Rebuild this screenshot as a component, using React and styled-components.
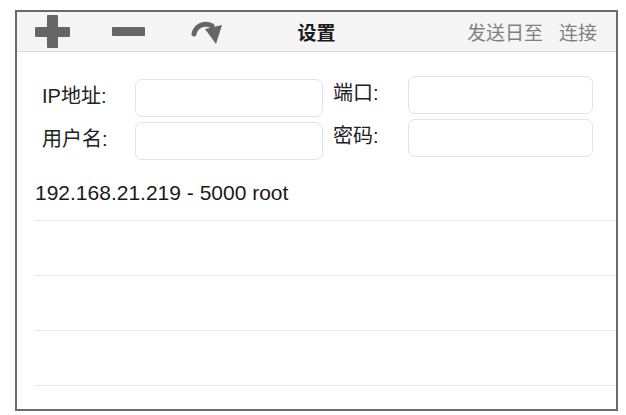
import React from "react";
import styled, { createGlobalStyle } from "styled-components";

const hosts = ["192.168.21.219 - 5000 root", "", "", ""];

export default function App() {
  return (
    <>
      <GlobalStyle />
      <Window>
        <Toolbar>
          <Tools>
            <PlusIcon />
            <MinusIcon />
            <RedoIcon />
          </Tools>
          <Title>设置</Title>
          <Actions>
            <Action>发送日至</Action>
            <Action>连接</Action>
          </Actions>
        </Toolbar>

        <Form>
          <FieldGroup $offset={3}>
            <Label>IP地址:</Label>
            <Input width={188} />
            <Label>用户名:</Label>
            <Input width={188} />
          </FieldGroup>
          <FieldGroup $offset={0} $labelWidth={75}>
            <Label>端口:</Label>
            <Input width={185} />
            <Label>密码:</Label>
            <Input width={185} type="password" />
          </FieldGroup>
        </Form>

        <List>
          {hosts.map((h, i) => (
            <Row key={i}>{h}</Row>
          ))}
        </List>
      </Window>
    </>
  );
}

function PlusIcon() {
  return (
    <svg width="35" height="33" viewBox="0 0 35 33">
      <rect x="0" y="12" width="35" height="10" rx="1" fill="#666" />
      <rect x="12" y="0" width="11" height="33" rx="1" fill="#666" />
    </svg>
  );
}

function MinusIcon() {
  return (
    <svg width="33" height="33" viewBox="0 0 33 33">
      <rect x="0" y="12" width="33" height="9" rx="1" fill="#666" />
    </svg>
  );
}

function RedoIcon() {
  return (
    <svg width="34" height="30" viewBox="0 0 34 30">
      <path
        d="M4 17 A12 12 0 0 1 22 9"
        stroke="#666"
        strokeWidth="5"
        fill="none"
        strokeLinecap="round"
      />
      <polygon points="15,12 32,8 26,27" fill="#666" />
    </svg>
  );
}

const GlobalStyle = createGlobalStyle`
  body {
    margin: 0;
    background: #fff;
    font-family: "Liberation Sans", "Noto Sans CJK SC", sans-serif;
  }
`;

const Window = styled.div`
  margin: 10px 0 0 15px;
  width: 603px;
  height: 401px;
  box-sizing: border-box;
  border: 2px solid #6b6b6b;
  background: #fff;
  overflow: hidden;
`;

const Toolbar = styled.div`
  display: grid;
  grid-template-columns: 1fr auto 1fr;
  align-items: center;
  height: 39px;
  background: #f5f5f5;
  border-bottom: 1px solid #d9d9d9;
`;

const Tools = styled.div`
  display: flex;
  align-items: center;
  padding-left: 18px;
  gap: 42px;
  & > svg:last-child {
    margin-left: 3px;
  }
`;

const Title = styled.div`
  font-family: "Noto Sans CJK SC", sans-serif;
  font-weight: 700;
  font-size: 19px;
  color: #1a1a1a;
`;

const Actions = styled.div`
  display: flex;
  justify-content: flex-end;
  gap: 16px;
  padding-right: 19px;
`;

const Action = styled.span`
  font-family: "Noto Sans CJK SC", sans-serif;
  font-size: 19px;
  color: #808080;
`;

const Form = styled.div`
  display: flex;
  align-items: flex-start;
  gap: 10px;
  padding: 24px 0 0 25px;
  height: 90px;
`;

const FieldGroup = styled.div`
  display: grid;
  grid-template-columns: ${(p) => p.$labelWidth || 93}px auto;
  row-gap: 5px;
  align-items: center;
  margin-top: ${(p) => p.$offset}px;
`;

const Label = styled.span`
  font-family: "Liberation Sans", "Noto Sans CJK SC", sans-serif;
  font-size: 20px;
  line-height: 1;
  padding-bottom: 5px;
  color: #222;
`;

const Input = styled.input`
  width: ${(p) => p.width}px;
  height: 38px;
  box-sizing: border-box;
  border: 1.5px solid #e3e3e3;
  border-radius: 7px;
  background: #fff;
  outline: none;
`;

const List = styled.div`
  margin-left: 18px;
`;

const Row = styled.div`
  display: flex;
  align-items: center;
  height: 54px;
  border-bottom: 1px solid #e6e6e6;
  font-size: 21px;
  color: #1a1a1a;
`;
